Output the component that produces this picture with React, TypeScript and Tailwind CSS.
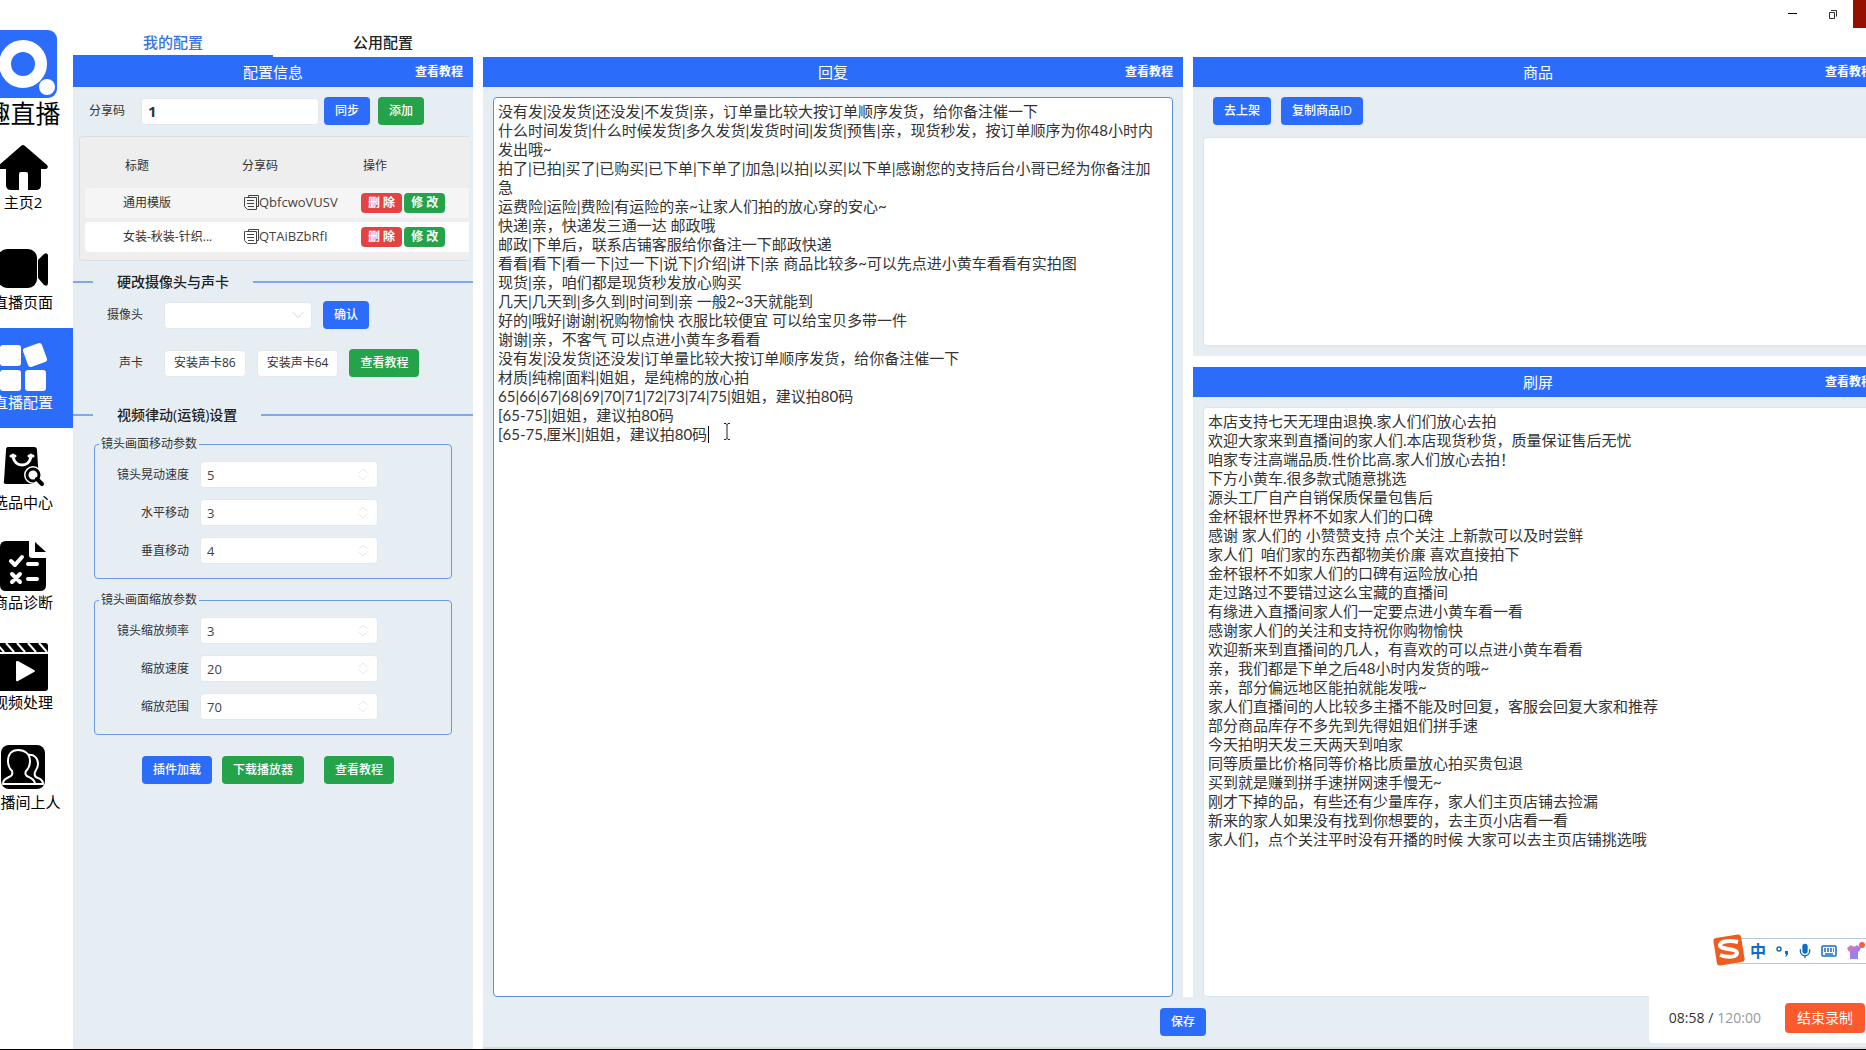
import { useState, type ReactNode } from 'react';
import { ChevronDown, ChevronUp, Mic } from 'lucide-react';
import { cva } from 'class-variance-authority';
import clsx from 'clsx';

const replyText = `没有发|没发货|还没发|不发货|亲，订单量比较大按订单顺序发货，给你备注催一下
什么时间发货|什么时候发货|多久发货|发货时间|发货|预售|亲，现货秒发，按订单顺序为你48小时内发出哦~
拍了|已拍|买了|已购买|已下单|下单了|加急|以拍|以买|以下单|感谢您的支持后台小哥已经为你备注加急
运费险|运险|费险|有运险的亲~让家人们拍的放心穿的安心~
快递|亲，快递发三通一达 邮政哦
邮政|下单后，联系店铺客服给你备注一下邮政快递
看看|看下|看一下|过一下|说下|介绍|讲下|亲 商品比较多~可以先点进小黄车看看有实拍图
现货|亲，咱们都是现货秒发放心购买
几天|几天到|多久到|时间到|亲 一般2~3天就能到
好的|哦好|谢谢|祝购物愉快 衣服比较便宜 可以给宝贝多带一件
谢谢|亲，不客气 可以点进小黄车多看看
没有发|没发货|还没发|订单量比较大按订单顺序发货，给你备注催一下
材质|纯棉|面料|姐姐，是纯棉的放心拍
65|66|67|68|69|70|71|72|73|74|75|姐姐，建议拍80码
[65-75]|姐姐，建议拍80码
[65-75,厘米]|姐姐，建议拍80码`;

const screenText = `本店支持七天无理由退换.家人们们放心去拍
欢迎大家来到直播间的家人们.本店现货秒货，质量保证售后无忧
咱家专注高端品质.性价比高.家人们放心去拍！
下方小黄车.很多款式随意挑选
源头工厂自产自销保质保量包售后
金杯银杯世界杯不如家人们的口碑
感谢 家人们的 小赞赞支持 点个关注 上新款可以及时尝鲜
家人们  咱们家的东西都物美价廉 喜欢直接拍下
金杯银杯不如家人们的口碑有运险放心拍
走过路过不要错过这么宝藏的直播间
有缘进入直播间家人们一定要点进小黄车看一看
感谢家人们的关注和支持祝你购物愉快
欢迎新来到直播间的几人，有喜欢的可以点进小黄车看看
亲，我们都是下单之后48小时内发货的哦~
亲，部分偏远地区能拍就能发哦~
家人们直播间的人比较多主播不能及时回复，客服会回复大家和推荐
部分商品库存不多先到先得姐姐们拼手速
今天拍明天发三天两天到咱家
同等质量比价格同等价格比质量放心拍买贵包退
买到就是赚到拼手速拼网速手慢无~
刚才下掉的品，有些还有少量库存，家人们主页店铺去捡漏
新来的家人如果没有找到你想要的，去主页小店看一看
家人们，点个关注平时没有开播的时候 大家可以去主页店铺挑选哦`;

const templates = [
  { title: '通用模版', code: 'QbfcwoVUSV' },
  { title: '女装-秋装-针织...', code: 'QTAiBZbRfI' },
];

const moveParams = [
  { id: 'shake', label: '镜头晃动速度', value: '5' },
  { id: 'horizontal', label: '水平移动', value: '3' },
  { id: 'vertical', label: '垂直移动', value: '4' },
];

const zoomParams = [
  { id: 'zoom-rate', label: '镜头缩放频率', value: '3' },
  { id: 'zoom-speed', label: '缩放速度', value: '20' },
  { id: 'zoom-range', label: '缩放范围', value: '70' },
];

const button = cva('flex shrink-0 items-center justify-center whitespace-nowrap rounded', {
  variants: {
    tone: {
      blue: 'bg-[#2b6dfa] text-white',
      green: 'bg-[#24a34b] text-white',
      red: 'bg-[#e44441] text-white',
      plain: 'border border-[#e3e8ec] bg-white text-[#333]',
    },
    size: {
      md: 'h-7 px-[11px] text-xs font-medium',
      sm: 'h-5 px-[7px] text-xs font-bold',
      outline: 'h-[27px] px-[9px] text-xs',
    },
  },
  defaultVariants: { tone: 'blue', size: 'md' },
});

/* Sidebar icons */

function HomeIcon() {
  return (
    <svg viewBox="0 0 50 50" className="size-[50px]" aria-hidden="true">
      <path d="M23 5q2-2 4 0l22 19q2 3-1 4h-5v16q0 5-5 5h-8V33q0-2-2-2h-5q-2 0-2 2v16h-8q-5 0-5-5V28H2q-3-1-1-4z" />
    </svg>
  );
}

function CameraIcon() {
  return (
    <svg viewBox="0 0 50 50" className="size-[50px]" aria-hidden="true">
      <rect y="8" width="39" height="39" rx="9" />
      <path d="M40 19l6-6q4-2 4 2v27q0 4-4 2l-6-7z" />
    </svg>
  );
}

function GridIcon() {
  return (
    <svg viewBox="0 0 50 50" className="size-[50px]" fill="white" aria-hidden="true">
      <rect x="2" y="4" width="21" height="21" rx="3" />
      <rect x="27" y="4" width="20" height="20" rx="3" transform="rotate(-20 37 14)" />
      <rect x="2" y="29" width="21" height="21" rx="3" />
      <rect x="27" y="29" width="21" height="21" rx="3" />
    </svg>
  );
}

function BagSearchIcon() {
  return (
    <svg viewBox="0 0 50 50" className="size-[50px]" aria-hidden="true">
      <path d="M10 6h26q3 0 3 3l2 31q0 3-3 3H8q-3 0-2-3L8 9q0-3 2-3z" />
      <path d="M15 14v2q2 8 9 8t9-8v-2M13 15h4M31 15h4" fill="none" stroke="white" strokeWidth="3" strokeLinecap="round" />
      <circle cx="35" cy="34" r="9" fill="white" />
      <circle cx="35" cy="34" r="6" fill="white" stroke="black" strokeWidth="3" />
      <path d="M38 40l6 6" stroke="white" strokeWidth="7" />
      <path d="M39 38l5 5" stroke="black" strokeWidth="4" strokeLinecap="round" />
    </svg>
  );
}

function ChecklistIcon() {
  return (
    <svg viewBox="0 0 50 50" className="size-[50px]" aria-hidden="true">
      <path d="M8 0h23v14q0 3 3 3h14v27q0 6-6 6H8q-6 0-6-6V6q0-6 6-6z" />
      <path d="M37 1l11 10H37z" />
      <path d="M13 20l4 4 7-8M30 23h9M30 38h9M14 33l8 8M22 33l-8 8" fill="none" stroke="white" strokeWidth="4" strokeLinecap="round" strokeLinejoin="round" />
    </svg>
  );
}

function ClapperIcon() {
  return (
    <svg viewBox="0 0 50 50" className="size-[50px]" aria-hidden="true">
      <rect y="2" width="50" height="48" rx="3" />
      <path d="M-2 2l8 9M8 2l8 9M19 2l8 9M30 2l8 9M41 2l8 9" stroke="white" strokeWidth="2" />
      <path d="M0 12h50" stroke="white" strokeWidth="2" />
      <path d="M19 20q-1 0-1 1v18q0 2 2 1l16-9q2-1 0-2L20 20z" fill="white" />
    </svg>
  );
}

function PeopleIcon() {
  return (
    <svg viewBox="0 0 50 50" className="size-[50px]" aria-hidden="true">
      <rect x="3" y="4" width="44" height="44" rx="8" />
      <path
        d="M20 9c-6 0-10 4-10 11 0 4 1 7 4 10 1 3 0 5-3 6-4 2-6 3-6 7h32c0-4-3-5-6-7-4-1-4-4-3-6 3-3 4-6 4-10 0-7-5-11-12-11zM30 14c6-1 10 3 10 9 0 4-2 6-3 8-1 3 0 5 3 6 3 1 5 3 5 6h-8"
        fill="none"
        stroke="white"
        strokeWidth="2"
        strokeLinejoin="round"
      />
    </svg>
  );
}

function CopyIcon() {
  return (
    <svg viewBox="0 0 15 15" className="size-[15px]" fill="none" stroke="#444" aria-hidden="true">
      <path d="M4.500 2.500v-2h10v11h-2M1.500 2.500h11v12h-9l-3-3v-9zM3 5.500h7M3 8.500h7M4 11.500h6" />
    </svg>
  );
}

const navItems = [
  { label: '主页2', icon: <HomeIcon /> },
  { label: '直播页面', icon: <CameraIcon /> },
  { label: '直播配置', icon: <GridIcon />, active: true },
  { label: '选品中心', icon: <BagSearchIcon /> },
  { label: '商品诊断', icon: <ChecklistIcon /> },
  { label: '视频处理', icon: <ClapperIcon /> },
  { label: '直播间上人', icon: <PeopleIcon /> },
];

function Sidebar() {
  return (
    <aside className="flex w-[100px] shrink-0 flex-col items-center pt-[30px]">
      <svg viewBox="0 0 68 68" className="size-[68px]" role="img" aria-label="趣直播">
        <rect width="68" height="68" rx="9" fill="#2b6dfa" />
        <circle cx="34" cy="34" r="18" fill="none" stroke="white" strokeWidth="12" />
        <circle cx="58" cy="57" r="8" fill="white" />
      </svg>
      <h1 className="h-[30px] text-[25px] leading-[30px] whitespace-nowrap">趣直播</h1>
      <nav className="w-full">
        {navItems.map((item) => (
          <a
            key={item.label}
            href="#"
            aria-current={item.active ? 'page' : undefined}
            className={clsx(
              'flex h-[100px] flex-col items-center pt-[13px] text-[15px] leading-[22px] whitespace-nowrap',
              item.active ? 'bg-[#2b6dfa] text-white' : 'text-black'
            )}
          >
            {item.icon}
            {item.label}
          </a>
        ))}
      </nav>
    </aside>
  );
}

function TopBar() {
  return (
    <header className="flex h-[57px] items-start justify-between">
      <div className="flex pt-[29px] text-[15px] font-medium" role="tablist">
        <button role="tab" aria-selected="true" className="h-7 w-[200px] border-b-2 border-[#2b6dfa] text-[#3a72e0]">
          我的配置
        </button>
        <button role="tab" aria-selected="false" className="h-7 w-[220px] border-b-2 border-transparent text-[#222]">
          公用配置
        </button>
      </div>
      <div className="flex">
        <button aria-label="最小化" className="flex h-7 w-10 items-center justify-center">
          <svg viewBox="0 0 10 10" className="size-[10px]" stroke="black"><path d="M0 4.500h9" /></svg>
        </button>
        <button aria-label="还原" className="flex h-7 w-10 items-center justify-center">
          <svg viewBox="0 0 10 10" className="size-[10px]" fill="none" stroke="#333">
            <path d="M1.500 3.500h5v6h-5zM3 1.500h5.500v6" />
          </svg>
        </button>
        <button aria-label="关闭" className="h-7 w-[30px] bg-[#940f00]" />
      </div>
    </header>
  );
}

function PanelHeader({ title }: { title: string }) {
  return (
    <div className="relative flex h-[30px] shrink-0 items-center justify-center bg-[#2b6dfa] text-white">
      <h2 className="text-[15px]">{title}</h2>
      <a href="#" className="absolute right-[10px] text-xs font-bold">
        查看教程
      </a>
    </div>
  );
}

function SectionTitle({ children }: { children: ReactNode }) {
  return (
    <div className="flex h-5 items-center gap-6">
      <span className="h-[2px] w-5 bg-[#81a7ea]" />
      <h3 className="text-sm leading-5 font-medium text-[#222]">{children}</h3>
      <span className="h-[2px] flex-1 bg-[#81a7ea]" />
    </div>
  );
}

type Param = { id: string; label: string; value: string };

function ParamGroup({ title, params }: { title: string; params: Param[] }) {
  return (
    <fieldset className="mx-[21px] rounded border border-[#6c9bdc] pt-[9px] pb-[14px]">
      <legend className="ml-1 px-[2px] text-xs leading-4">{title}</legend>
      <div className="flex flex-col gap-[11px]">
        {params.map((param) => (
          <div key={param.id} className="flex items-center">
            <label htmlFor={param.id} className="mr-[11px] w-[94px] text-right">
              {param.label}
            </label>
            <div className="relative">
              <input
                id={param.id}
                defaultValue={param.value}
                inputMode="numeric"
                className="block h-[27px] w-[178px] rounded border border-[#e3e8ec] bg-white px-[6px] text-[13px] text-[#444]"
              />
              <ChevronUp className="absolute top-[2px] right-[7px] size-4 text-[#dcdcdc]" strokeWidth={1} />
              <ChevronDown className="absolute right-[7px] bottom-[2px] size-4 text-[#dcdcdc]" strokeWidth={1} />
            </div>
          </div>
        ))}
      </div>
    </fieldset>
  );
}

function TemplateTable() {
  return (
    <div className="mt-[11px] mr-1 ml-[6px] rounded-l border border-r-0 border-[#dcdfe1] bg-[#eee] pb-1 pl-[5px]">
      <table className="w-full table-fixed border-separate border-spacing-x-0 border-spacing-y-1 text-left">
        <thead>
          <tr className="h-[43px]">
            <th className="w-[157px] pt-[6px] pl-10 font-normal">标题</th>
            <th className="w-[119px] pt-[6px] font-normal">分享码</th>
            <th className="pt-[6px] pl-[2px] font-normal">操作</th>
          </tr>
        </thead>
        <tbody>
          {templates.map((item, index) => (
            <tr key={item.code} className={clsx('h-[30px]', index === 0 ? 'bg-[#f5f5f5]' : 'bg-white')}>
              <td className="rounded-l pl-[38px] whitespace-nowrap">{item.title}</td>
              <td>
                <span className="flex items-center pl-[2px] text-[13px] text-[#444]">
                  <CopyIcon />
                  {item.code}
                </span>
              </td>
              <td>
                <div className="flex gap-[2px]">
                  <button className={button({ tone: 'red', size: 'sm' })}>删 除</button>
                  <button className={button({ tone: 'green', size: 'sm' })}>修 改</button>
                </div>
              </td>
            </tr>
          ))}
        </tbody>
      </table>
    </div>
  );
}

function ConfigPanel() {
  return (
    <section className="w-[400px] shrink-0 bg-[#e6eef4] text-xs text-[#333]">
      <PanelHeader title="配置信息" />
      <div className="mt-[10px] flex items-center pl-4">
        <label htmlFor="share-code" className="w-[52px]">
          分享码
        </label>
        <input
          id="share-code"
          defaultValue="1"
          className="h-[27px] w-[178px] rounded border border-[#e3e8ec] bg-white px-[6px] text-[15px] font-bold"
        />
        <button className={clsx(button(), 'ml-[5px]')}>同步</button>
        <button className={clsx(button({ tone: 'green' }), 'ml-2')}>添加</button>
      </div>

      <TemplateTable />

      <div className="mt-[11px]">
        <SectionTitle>硬改摄像头与声卡</SectionTitle>
      </div>
      <div className="mt-[9px] flex items-center">
        <label htmlFor="camera" className="mr-[21px] w-[70px] text-right">
          摄像头
        </label>
        <div className="relative">
          <select id="camera" className="block h-[27px] w-[148px] appearance-none rounded border border-[#e3e8ec] bg-white" />
          <ChevronDown className="pointer-events-none absolute top-[3px] right-1 size-5 text-[#ccc]" strokeWidth={1} />
        </div>
        <button className={clsx(button(), 'ml-[11px]')}>确认</button>
      </div>
      <div className="mt-5 flex items-center gap-[11px]">
        <span className="mr-[10px] w-[70px] text-right">声卡</span>
        <button className={button({ tone: 'plain', size: 'outline' })}>安装声卡86</button>
        <button className={button({ tone: 'plain', size: 'outline' })}>安装声卡64</button>
        <button className={button({ tone: 'green' })}>查看教程</button>
      </div>

      <div className="mt-7 mb-[11px]">
        <SectionTitle>视频律动(运镜)设置</SectionTitle>
      </div>
      <div className="flex flex-col gap-[13px]">
        <ParamGroup title="镜头画面移动参数" params={moveParams} />
        <ParamGroup title="镜头画面缩放参数" params={zoomParams} />
      </div>

      <div className="mt-[21px] flex pl-[69px]">
        <button className={button()}>插件加载</button>
        <button className={clsx(button({ tone: 'green' }), 'ml-[10px]')}>下载播放器</button>
        <button className={clsx(button({ tone: 'green' }), 'ml-5')}>查看教程</button>
      </div>
    </section>
  );
}

const areaClass =
  'block w-full flex-1 resize-none rounded border bg-white py-1 pr-3 pl-1 text-[15px] leading-[19px] text-[#333] outline-none';

function ReplyPanel() {
  const [value, setValue] = useState(replyText);

  return (
    <section className="flex flex-[70] flex-col bg-[#e6eef4]">
      <PanelHeader title="回复" />
      <div className="relative flex flex-1 px-[10px] pt-[10px]">
        <textarea
          aria-label="回复"
          value={value}
          onChange={(e) => setValue(e.target.value)}
          spellCheck={false}
          className={clsx(areaClass, 'border-[#5c90d2] font-["Lato","Noto_Sans_CJK_SC",sans-serif]')}
        />
        {/* text caret and mouse pointer */}
        <span className="absolute top-[339px] left-[225px] h-[17px] w-px bg-black" />
        <svg viewBox="0 0 8 17" className="absolute top-[336px] left-[240px] h-[17px] w-2" fill="none" stroke="#222" aria-hidden="true">
          <path d="M1 .5h2l1 1 1-1h2M4 1v15M1 16.500h2l1-1 1 1h2" />
        </svg>
      </div>
    </section>
  );
}

function RightColumn() {
  const [value, setValue] = useState(screenText);

  return (
    <div className="flex flex-[69] flex-col">
      <section className="mb-[11px] flex h-[299px] flex-col bg-[#e6eef4]">
        <PanelHeader title="商品" />
        <div className="flex gap-[10px] px-5 pt-[10px] pb-3">
          <button className={button()}>去上架</button>
          <button className={button()}>复制商品ID</button>
        </div>
        <div className="flex flex-1 px-[10px] pb-[10px]">
          <textarea aria-label="商品" className={clsx(areaClass, 'border-[#dde4e8]')} />
        </div>
      </section>
      <section className="flex flex-1 flex-col bg-[#e6eef4]">
        <PanelHeader title="刷屏" />
        <div className="flex flex-1 px-[10px] pt-[10px]">
          <textarea
            aria-label="刷屏"
            value={value}
            onChange={(e) => setValue(e.target.value)}
            spellCheck={false}
            className={clsx(areaClass, 'border-[#dde4e8] font-["Lato","Noto_Sans_CJK_SC",sans-serif]')}
          />
        </div>
      </section>
    </div>
  );
}

function InputMethodBar() {
  return (
    <div className="absolute right-0 bottom-[85px] flex h-[26px] w-[130px] items-center border-y border-[#b4c9e0] bg-white text-[#0f6cc4]">
      <svg viewBox="0 0 32 32" className="absolute -top-[5px] -left-[23px] size-8" aria-hidden="true">
        <rect x="2" y="2" width="28" height="28" rx="3" fill="#ee5d20" transform="rotate(-9 16 16)" />
        <path d="M25 8c-8-2-17-1-18 3-1 5 17 3 17 8 0 4-9 5-17 2" fill="none" stroke="white" strokeWidth="4" />
      </svg>
      <div className="flex w-full items-center justify-between pl-[14px]">
        <span className="text-base leading-6 font-bold">中</span>
        <svg viewBox="0 0 14 14" className="size-[14px]" aria-hidden="true">
          <circle cx="4" cy="5" r="2" fill="none" stroke="currentColor" strokeWidth="1.500" />
          <path d="M10 7h3v3q-1 3-3 3 1-1 1-3h-1z" fill="currentColor" />
        </svg>
        <Mic className="size-4 [&>rect]:fill-current" strokeWidth={2} />
        <svg viewBox="0 0 16 12" className="h-3 w-4" fill="none" stroke="currentColor" aria-hidden="true">
          <rect x="1" y="1" width="14" height="10" rx="1" strokeWidth="1.500" />
          <path d="M3 4h10M3 6h10" strokeWidth="1.500" strokeDasharray="2 1" />
          <path d="M4 9h8" strokeWidth="1.500" />
        </svg>
        <svg viewBox="0 0 20 20" className="size-[20px]" aria-hidden="true">
          <defs>
            <linearGradient id="shirt" x1="0" y1="0" x2="1" y2="1">
              <stop offset="0" stopColor="#ef7a8c" />
              <stop offset="0.500" stopColor="#a67bee" />
              <stop offset="1" stopColor="#7c8ef8" />
            </linearGradient>
          </defs>
          <path d="M1 7l4-3q3 3 6 0l4 3-2 4-1-1v8H4v-8l-1 1z" fill="url(#shirt)" />
          <circle cx="16" cy="4" r="3" fill="#f2603a" />
        </svg>
      </div>
    </div>
  );
}

function RecorderBar() {
  return (
    <div className="absolute right-0 bottom-[6px] flex h-[50px] items-center rounded-bl bg-white pr-px pl-5 text-sm">
      <span className="text-[#333]">08:58 /</span>
      <span className="ml-1 text-[#999]">120:00</span>
      <button className="ml-6 h-[30px] rounded bg-[#fb5b2c] px-3 text-sm text-white">结束录制</button>
    </div>
  );
}

export default function App() {
  return (
    <div className='relative h-screen overflow-hidden border-b border-black bg-white font-["Open_Sans","Noto_Sans_CJK_SC",sans-serif]'>
      <div className="-mr-[17px] -ml-[27px] flex h-full">
        <Sidebar />
        <div className="flex min-w-0 flex-1 flex-col">
          <TopBar />
          <main className="flex min-h-0 flex-1 gap-[10px]">
            <ConfigPanel />
            <div className="flex min-w-0 flex-1 flex-col">
              <div className="flex min-h-0 flex-1 gap-[10px]">
                <ReplyPanel />
                <RightColumn />
              </div>
              <footer className="flex h-[52px] items-start justify-center border-b-2 border-[#d3dde2] bg-[#e6eef4] pt-[11px]">
                <button className={button()}>保存</button>
              </footer>
            </div>
          </main>
        </div>
      </div>
      <InputMethodBar />
      <RecorderBar />
    </div>
  );
}
